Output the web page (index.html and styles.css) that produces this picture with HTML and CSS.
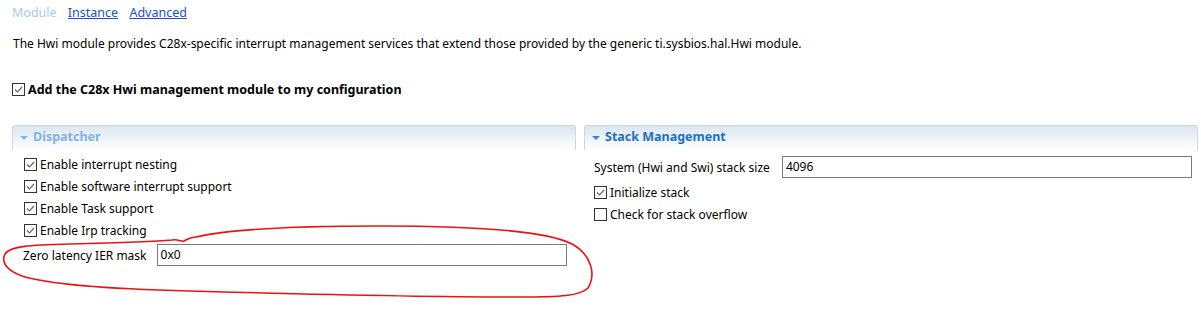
FILE: index.html
```html
<!DOCTYPE html>
<html lang="en">

<head>
    <meta charset="UTF-8">
    <title>Hwi</title>
    <link rel="stylesheet" href="styles.css">
</head>

<body>
    <!-- tabs -->
    <div class="tabs">
        <span class="tab current">Module</span>
        <a class="tab" href="javascript:;">Instance</a>
        <a class="tab" href="javascript:;">Advanced</a>
    </div>

    <p class="desc">The Hwi module provides C28x-specific interrupt management services that extend those provided by the generic ti.sysbios.hal.Hwi module.</p>

    <label class="check main-check">
        <svg class="box" width="13" height="13"><rect x="0.5" y="0.5" width="12" height="12" fill="#fff" stroke="#333"/><path d="M3 6.5l2.5 2.5 4.5-5" stroke="#666" stroke-width="1.2" fill="none"/></svg>
        Add the C28x Hwi management module to my configuration
    </label>

    <div class="sections">
        <!-- Dispatcher -->
        <div class="section left">
            <div class="sec-head disabled"><span class="arrow"></span>Dispatcher</div>
            <div class="sec-body">
                <label class="check row">
                    <svg class="box" width="13" height="13"><rect x="0.5" y="0.5" width="12" height="12" fill="#fff" stroke="#333"/><path d="M3 6.5l2.5 2.5 4.5-5" stroke="#666" stroke-width="1.2" fill="none"/></svg>
                    Enable interrupt nesting
                </label>
                <label class="check row">
                    <svg class="box" width="13" height="13"><rect x="0.5" y="0.5" width="12" height="12" fill="#fff" stroke="#333"/><path d="M3 6.5l2.5 2.5 4.5-5" stroke="#666" stroke-width="1.2" fill="none"/></svg>
                    Enable software interrupt support
                </label>
                <label class="check row">
                    <svg class="box" width="13" height="13"><rect x="0.5" y="0.5" width="12" height="12" fill="#fff" stroke="#333"/><path d="M3 6.5l2.5 2.5 4.5-5" stroke="#666" stroke-width="1.2" fill="none"/></svg>
                    Enable Task support
                </label>
                <label class="check row">
                    <svg class="box" width="13" height="13"><rect x="0.5" y="0.5" width="12" height="12" fill="#fff" stroke="#333"/><path d="M3 6.5l2.5 2.5 4.5-5" stroke="#666" stroke-width="1.2" fill="none"/></svg>
                    Enable Irp tracking
                </label>
                <div class="field zero">
                    <span class="field-label">Zero latency IER mask</span>
                    <div class="input">0x0</div>
                </div>
            </div>
        </div>

        <!-- Stack Management -->
        <div class="section right">
            <div class="sec-head"><span class="arrow"></span>Stack Management</div>
            <div class="sec-body">
                <div class="field">
                    <span class="field-label">System (Hwi and Swi) stack size</span>
                    <div class="input">4096</div>
                </div>
                <label class="check row">
                    <svg class="box" width="13" height="13"><rect x="0.5" y="0.5" width="12" height="12" fill="#fff" stroke="#333"/><path d="M3 6.5l2.5 2.5 4.5-5" stroke="#666" stroke-width="1.2" fill="none"/></svg>
                    Initialize stack
                </label>
                <label class="check row">
                    <svg class="box" width="13" height="13"><rect x="0.5" y="0.5" width="12" height="12" fill="#fff" stroke="#333"/></svg>
                    Check for stack overflow
                </label>
            </div>
        </div>
    </div>

    <!-- hand drawn red mark -->
    <svg class="scribble" width="1201" height="311">
        <path d="M196 237 C230 229 300 226 380 226 C470 226 545 230 572 244 C592 255 596 275 588 288 C580 296 560 297 520 297 C430 297 300 294 190 291 C110 289 50 285 22 276 C6 270 1 262 5 254 C10 246 30 245 70 244 C110 243 150 242 172 240 C178 239 182 242 184 241 C188 239 190 237 196 237"
            fill="none" stroke="#ee1111" stroke-width="1.6" stroke-linecap="round"/>
    </svg>
</body>

</html>
```

FILE: styles.css
```css
* {
    margin: 0;
    padding: 0;
}

body {
    width: 1201px;
    height: 311px;
    background-color: #fff;
    font-family: "Noto Sans", "Open Sans", sans-serif;
    font-size: 12px;
    color: #000;
    position: relative;
    overflow: hidden;
}

/* 顶部标签 */
.tabs {
    padding: 4px 0 0 12px;
    height: 18px;
    font-size: 12.5px;
    line-height: 17px;
}

.tab {
    margin-right: 8px;
    color: #1b4fc4;
    text-decoration: underline;
}

.tab.current {
    color: #a9cbee;
    text-decoration: none;
}

.desc {
    margin: 14px 0 0 13px;
    line-height: 16px;
}

.check {
    display: flex;
    align-items: center;
}

.check .box {
    margin-right: 3px;
    flex: none;
}

.main-check {
    margin: 28px 0 0 12px;
    font-size: 12.5px;
    font-weight: bold;
    height: 18px;
}

.sections {
    display: flex;
    gap: 8px;
    margin: 27px 0 0 12px;
}

.section.left {
    width: 564px;
}

.section.right {
    width: 614px;
}

.sec-head {
    height: 24px;
    line-height: 22px;
    padding-left: 20px;
    position: relative;
    border: 1px solid #cbd8e5;
    border-bottom: none;
    border-radius: 3px 3px 0 0;
    background: linear-gradient(#dce6f1, #fff);
    color: #1a6fc9;
    font-weight: bold;
    font-size: 12.5px;
}

.sec-head.disabled {
    color: #80b3e6;
}

.arrow {
    position: absolute;
    left: 7px;
    top: 10px;
    border-left: 4px solid transparent;
    border-right: 4px solid transparent;
    border-top: 4px solid #3c86d4;
}

.disabled .arrow {
    border-top-color: #86b6e6;
}

.left .sec-body {
    padding: 3px 0 0 12px;
}

.right .sec-body {
    padding: 6px 0 0 10px;
}

.row {
    height: 22px;
}

.field {
    display: flex;
    align-items: center;
    height: 22px;
}

.field-label {
    margin-right: 10px;
}

.zero {
    margin: 3px 0 0 -1px;
}

.input {
    height: 22px;
    box-sizing: border-box;
    border: 1px solid #7a7a7a;
    padding: 0 3px;
    line-height: 20px;
    width: 410px;
}

.right .field {
    margin-bottom: 3px;
}

.right .field-label {
    margin-right: 12px;
}

/* 红色手绘圈，叠加在内容上 */
.scribble {
    position: absolute;
    left: 0;
    top: 0;
    pointer-events: none;
}
```
